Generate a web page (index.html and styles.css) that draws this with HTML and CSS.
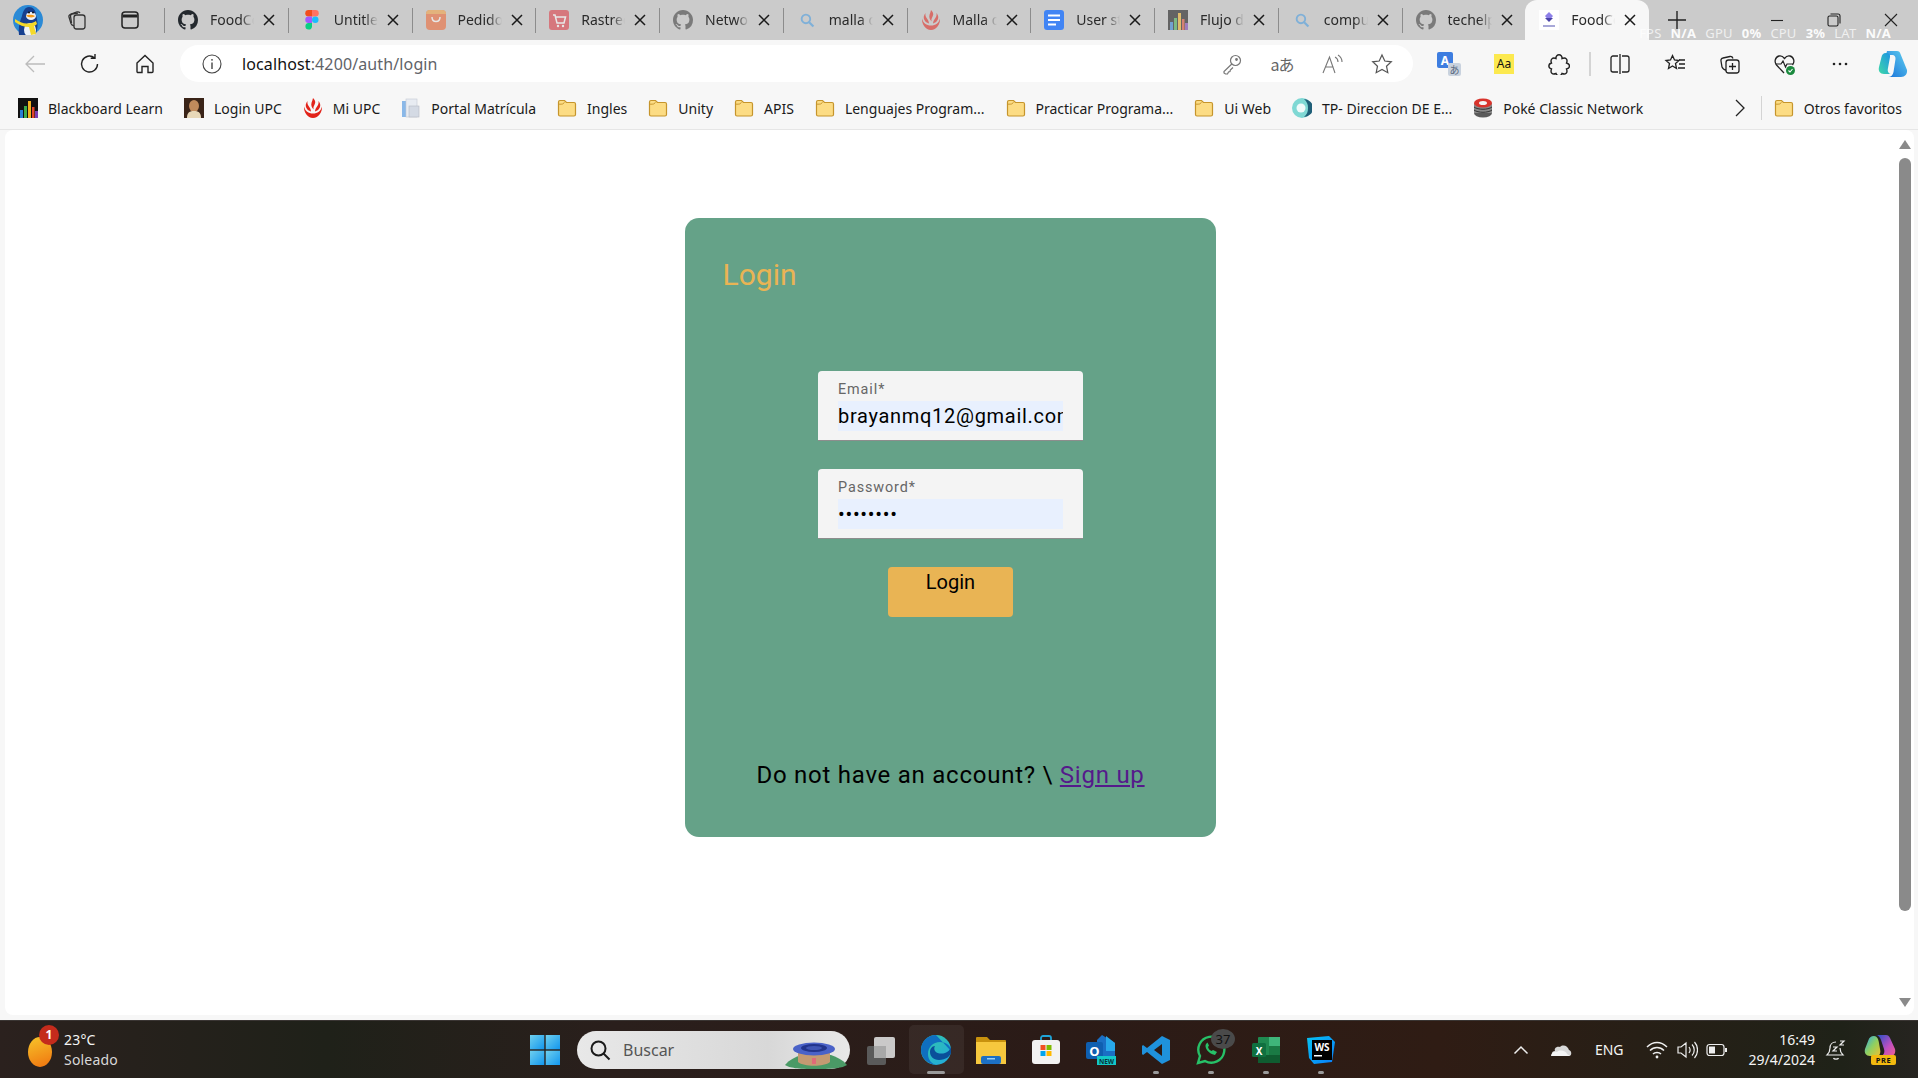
FILE: index.html
```html
<!DOCTYPE html>
<html lang="es">
<head>
<meta charset="utf-8">
<title>FoodCompass</title>
<link rel="stylesheet" href="styles.css">
</head>
<body>
<svg class="sprite" aria-hidden="true">
  <symbol id="github" viewBox="0 0 16 16"><path fill="currentColor" d="M8 0C3.58 0 0 3.58 0 8c0 3.54 2.29 6.53 5.47 7.59.4.07.55-.17.55-.38 0-.19-.01-.82-.01-1.49-2.01.37-2.53-.49-2.69-.94-.09-.23-.48-.94-.82-1.13-.28-.15-.68-.52-.01-.53.63-.01 1.08.58 1.23.82.72 1.21 1.87.87 2.33.66.07-.52.28-.87.51-1.07-1.78-.2-3.64-.89-3.64-3.95 0-.87.31-1.59.82-2.15-.08-.2-.36-1.02.08-2.12 0 0 .67-.21 2.2.82.64-.18 1.32-.27 2-.27.68 0 1.36.09 2 .27 1.53-1.04 2.2-.82 2.2-.82.44 1.1.16 1.92.08 2.12.51.56.82 1.27.82 2.15 0 3.07-1.87 3.75-3.65 3.95.29.25.54.73.54 1.48 0 1.07-.01 1.93-.01 2.2 0 .21.15.46.55.38A8.013 8.013 0 0016 8c0-4.42-3.58-8-8-8z"/></symbol>
  <symbol id="close" viewBox="0 0 14 14"><path d="M2 2l10 10M12 2L2 12" stroke="#1a1a1a" stroke-width="1.5" fill="none"/></symbol>
  <symbol id="search" viewBox="-4 -4 28 28"><circle cx="8.5" cy="8.5" r="6" fill="none" stroke="#7fb0d8" stroke-width="2.6"/><path d="M13 13l6 6" stroke="#7fb0d8" stroke-width="3"/></symbol>
  <symbol id="upc" viewBox="0 0 20 20"><path fill="#e2231a" d="M10 0c2 2 3 4 1.600 6.500C10.500 8.500 10 10 10.800 11.500 8.500 10 7.800 7 8.600 4.600 9.100 3 9.800 1.500 10 0zM4.500 3c-.3 2 0 3.500 1.300 5.200C7.300 10.300 8 12 8 13.500 5 13 2.300 10 2.800 6.600 3 5.200 3.700 4 4.500 3zM15.500 3c.8 1 1.500 2.200 1.700 3.600.5 3.400-2.200 6.400-5.200 6.900 0-1.500.7-3.200 2.200-5.300C15.500 6.500 15.800 5 15.500 3zM1 8.500C2 13 5.500 15.500 10 15.500S18 13 19 8.500c.5 5.500-3.500 11.500-9 11.500S.5 14 1 8.500z"/></symbol>
  <symbol id="bars" viewBox="0 0 20 20"><rect width="20" height="20" fill="#111"/><rect x="2" y="12" width="3" height="8" fill="#2a7fd5"/><rect x="6" y="8" width="3" height="12" fill="#3bab4a"/><rect x="10" y="3" width="3" height="17" fill="#f2b01e"/><rect x="14" y="9" width="2.500" height="11" fill="#e0452c"/><rect x="17" y="13" width="3" height="7" fill="#7a3fb0"/></symbol>
  <symbol id="folder" viewBox="0 0 20 20"><path d="M1.500 4c0-1 .6-1.500 1.500-1.500h4.500L9.500 4.500H17c1 0 1.500.6 1.500 1.500v10.500c0 1-.6 1.500-1.500 1.500H3c-1 0-1.500-.6-1.500-1.500z" fill="#fcdc84" stroke="#c6952c" stroke-width="1.200"/><path d="M1.500 6.200c2 0 3 0 4-.2l2-1.500" fill="none" stroke="#c6952c" stroke-width="1"/></symbol>
</svg>

<header class="tabstrip">
  <div class="lead">
    <svg class="avatar" viewBox="0 0 30 30"><circle cx="15" cy="15" r="15" fill="#2b8ad6"/><path d="M6 30c-1-8 1-14 3-19 1-5 3-9 7-9s7 3 7 8c2 6 2 14 0 18-3 2-11 4-17 2z" fill="#17408f"/><ellipse cx="17" cy="25" rx="6" ry="7" fill="#eef3fa"/><ellipse cx="18" cy="11" rx="5" ry="4" fill="#eef3fa"/><path d="M13 10.500c2-1 7-1 9 .5-1 2-7 2-9-.5z" fill="#f59a1b"/><circle cx="16" cy="7.500" r="1" fill="#111"/><circle cx="20" cy="7.500" r="1" fill="#111"/><path d="M2 14c4 3 9 5 13 4.500 3 0 6-1 8-2.500l1 3c-1 1-2 1.500-3 2l2 8-5 1-2-8c-5 0-10-2-14-5z" fill="#f4d92a"/></svg>
    <svg class="ico22" viewBox="0 0 22 22" fill="none" stroke="#333" stroke-width="1.300"><rect x="8" y="6" width="11" height="14" rx="2.500"/><path d="M8 17c-1.500-.5-2.500-1-3-2.500L3 8c-.4-1.500.5-2.500 2-3l6-2c1.300-.3 2.300 0 3 1"/><path d="M5.500 14l-1-7c0-1 .5-1.800 1.500-2l6-.8"/></svg>
    <svg class="ico22" viewBox="0 0 22 22" fill="none" stroke="#222" stroke-width="1.500"><rect x="3" y="3" width="16" height="16" rx="3"/><path d="M3.500 7h15" stroke-width="3"/></svg>
  </div>
  <div class="tab"><svg class="fav gh-dark"><use href="#github"/></svg><span class="tab-title">FoodCompass</span><svg class="x"><use href="#close"/></svg></div>
  <div class="tab"><svg class="fav" viewBox="0 0 20 20"><path d="M6.500 0H10v6.500H6.500a3.250 3.250 0 010-6.500z" fill="#f24e1e"/><path d="M10 0h3.500a3.250 3.250 0 010 6.500H10z" fill="#ff7262"/><path d="M6.500 6.500H10V13H6.500a3.250 3.250 0 010-6.500z" fill="#a259ff"/><circle cx="13.250" cy="9.750" r="3.250" fill="#1abcfe"/><path d="M6.500 13H10v3.500a3.300 3.300 0 11-3.500-3.500z" fill="#0acf83"/></svg><span class="tab-title">Untitled</span><svg class="x"><use href="#close"/></svg></div>
  <div class="tab"><svg class="fav dim" viewBox="0 0 20 20"><rect width="20" height="20" rx="4" fill="#f0622c"/><path d="M0 4a4 4 0 014-4h12a4 4 0 014 4z" fill="#f7a13c"/><path d="M6 7c0 6 8 6 8 0" fill="none" stroke="#fff" stroke-width="1.500"/></svg><span class="tab-title">Pedidos</span><svg class="x"><use href="#close"/></svg></div>
  <div class="tab"><svg class="fav dim" viewBox="0 0 20 20"><rect width="20" height="20" rx="3" fill="#e0343f"/><path d="M4 5h2l2 8h7l1.500-6H7" fill="none" stroke="#fff" stroke-width="1.500"/><circle cx="9" cy="16" r="1.200" fill="#fff"/><circle cx="14" cy="16" r="1.200" fill="#fff"/></svg><span class="tab-title">Rastreo</span><svg class="x"><use href="#close"/></svg></div>
  <div class="tab"><svg class="fav gh-dim"><use href="#github"/></svg><span class="tab-title">Network</span><svg class="x"><use href="#close"/></svg></div>
  <div class="tab"><svg class="fav"><use href="#search"/></svg><span class="tab-title">malla de</span><svg class="x"><use href="#close"/></svg></div>
  <div class="tab"><svg class="fav dim"><use href="#upc"/></svg><span class="tab-title">Malla de</span><svg class="x"><use href="#close"/></svg></div>
  <div class="tab"><svg class="fav" viewBox="0 0 20 20"><rect width="20" height="20" rx="3" fill="#4285f4"/><path d="M4 5.500h12M4 10h12M4 14.500h8" stroke="#fff" stroke-width="2"/></svg><span class="tab-title">User stories</span><svg class="x"><use href="#close"/></svg></div>
  <div class="tab"><svg class="fav dim"><use href="#bars"/></svg><span class="tab-title">Flujo de</span><svg class="x"><use href="#close"/></svg></div>
  <div class="tab"><svg class="fav"><use href="#search"/></svg><span class="tab-title">computer</span><svg class="x"><use href="#close"/></svg></div>
  <div class="tab"><svg class="fav gh-dim"><use href="#github"/></svg><span class="tab-title">techelp</span><svg class="x"><use href="#close"/></svg></div>
  <div class="tab tab-active"><svg class="fav" viewBox="0 0 20 20"><rect width="20" height="20" fill="#fff"/><path d="M10 2l4 4-4 5-4-5z" fill="#8d80e8"/><path d="M6 8h8l-4 4z" fill="#4a43a8"/><path d="M4 16h12" stroke="#a8a8d8" stroke-width="2"/></svg><span class="tab-title">FoodCompass</span><svg class="x"><use href="#close"/></svg></div>
  <svg class="newtab" viewBox="0 0 20 20"><path d="M10 1v18M1 10h18" stroke="#222" stroke-width="1.400"/></svg>
  <div class="winctl">
    <svg viewBox="0 0 16 16"><path d="M2 8.500h12" stroke="#222" stroke-width="1.100"/></svg>
    <svg viewBox="0 0 16 16" fill="none" stroke="#222" stroke-width="1.100"><rect x="2" y="4" width="10" height="10" rx="1.500"/><path d="M4.500 2h7.500a2 2 0 012 2v7.500"/></svg>
    <svg viewBox="0 0 16 16"><path d="M2 2l12 12M14 2L2 14" stroke="#222" stroke-width="1.100"/></svg>
  </div>
  <div class="perf">FPS <b>N/A</b> GPU <b>0%</b> CPU <b>3%</b> LAT <b>N/A</b></div>
</header>

<nav class="toolbar">
  <div class="navbtn"><svg class="ico22" viewBox="0 0 22 22" fill="none" stroke="#bcbcbc" stroke-width="1.300"><path d="M21 11H2M10 3l-8 8 8 8"/></svg></div>
  <div class="navbtn"><svg class="ico22" viewBox="0 0 22 22" fill="none" stroke="#222" stroke-width="1.400"><path d="M18.500 11a8 8 0 11-3-6.200M16 1v4.300h-4.300"/></svg></div>
  <div class="navbtn"><svg class="ico22" viewBox="0 0 22 22" fill="none" stroke="#222" stroke-width="1.400"><path d="M3 10l8-7.500 8 7.500v8.500a1 1 0 01-1 1h-4v-6H8v6H4a1 1 0 01-1-1z"/></svg></div>
  <div class="address">
    <svg class="ico20" viewBox="0 0 20 20" fill="none" stroke="#444" stroke-width="1.100"><circle cx="10" cy="10" r="9"/><path d="M10 8.500V15" stroke-width="1.400"/><circle cx="10" cy="5.800" r=".9" fill="#444" stroke="none"/></svg>
    <span class="url"><span class="host">localhost</span>:4200/auth/login</span>
    <div class="addr-tools">
      <div class="navbtn50"><svg class="ico22" viewBox="0 0 22 22" fill="none" stroke="#777" stroke-width="1.200"><circle cx="14.500" cy="7.500" r="5"/><path d="M10.800 11L3 18.500v1.500l1.500 1h2l1-2 1.500-.5.300-1.500L12 14.500"/><circle cx="15.500" cy="6.500" r=".8" fill="#777"/></svg></div>
      <div class="navbtn50"><span class="translate">aあ</span></div>
      <div class="navbtn50"><svg class="ico22" viewBox="0 0 22 22" fill="none" stroke="#777" stroke-width="1.100"><path d="M2 20L8.500 4 14 20M4.500 14h8M14 4c2 1 3 3 3 5M17 2c2.500 1.500 4 4 4 7"/></svg></div>
      <div class="navbtn50"><svg class="ico22" viewBox="0 0 22 22" fill="none" stroke="#555" stroke-width="1.200"><path d="M11 2l2.800 6 6.500.8-4.800 4.400 1.300 6.500L11 16.500l-5.800 3.200 1.300-6.500L1.700 8.800 8.200 8z"/></svg></div>
    </div>
  </div>
  <div class="tools">
    <div class="navbtn"><svg class="ico26" viewBox="0 0 26 26"><rect x="1" y="1" width="16" height="16" rx="2" fill="#3d7de0"/><text x="9" y="14" class="t-a">A</text><rect x="12" y="12" width="13" height="13" rx="2" fill="#c9d2de"/><text x="18.500" y="23" class="t-ja">あ</text></svg></div>
    <div class="navbtn"><span class="aa">Aa</span></div>
    <div class="navbtn"><svg class="ico22" viewBox="0 0 22 22" fill="none" stroke="#222" stroke-width="1.400"><path d="M8 5.500c-.5-5 6.500-5 6 0 4-1.500 6 1 4.500 4.500 4 1 4 5 0 6 1.500 4-1 6-4.500 4.500-1 3-5 3-6 0-3.500 1.500-6-.5-4.500-4.500-3.500-1-3.500-5 0-6C2 6.500 4.500 4 8 5.500z"/></svg></div>
    <span class="tool-sep"></span>
    <div class="navbtn"><svg class="ico22" viewBox="0 0 22 22" fill="none" stroke="#222" stroke-width="1.300"><path d="M9 3H4a2 2 0 00-2 2v12a2 2 0 002 2h5M13 3h5a2 2 0 012 2v12a2 2 0 01-2 2h-5M11 1v20"/></svg></div>
    <div class="navbtn"><svg class="ico22" viewBox="0 0 22 22" fill="none" stroke="#222" stroke-width="1.300"><path d="M8.500 2.500l2 4.500 4.500.5-3.500 3 1 5-4-2.500L4.500 15.500l1-5L2 7.500l4.500-.5zM15 7h6M15 11h6M14 15h7"/></svg></div>
    <div class="navbtn"><svg class="ico22" viewBox="0 0 22 22" fill="none" stroke="#222" stroke-width="1.300"><rect x="7" y="7" width="13" height="13" rx="2.500"/><path d="M13.500 10v7M10 13.500h7M7 17c-2 0-3-1-4-3L2 8c-.3-1.500.4-2.700 2-3l7-1.500c1.500-.2 2.500.5 3 2"/></svg></div>
    <div class="navbtn"><svg class="ico24" viewBox="0 0 24 24"><path d="M11 21L3.500 13C1 10 2 5 6 4c2-.5 4 .5 5.500 2.500C13 4.500 15 3.500 17 4c4 1 5 6 2.500 9" fill="none" stroke="#222" stroke-width="1.300"/><path d="M2.500 12H8l2-3 2.500 6 1.500-3h6" fill="none" stroke="#222" stroke-width="1.200"/><circle cx="17.500" cy="18.500" r="4.500" fill="#1b8a3e"/><path d="M15.500 18.500l1.500 1.500 2.500-3" fill="none" stroke="#fff" stroke-width="1.100"/></svg></div>
    <div class="navbtn"><svg class="ico20" viewBox="0 0 20 20"><circle cx="4" cy="10" r="1.300" fill="#222"/><circle cx="10" cy="10" r="1.300" fill="#222"/><circle cx="16" cy="10" r="1.300" fill="#222"/></svg></div>
    <div class="navbtn copilot-slot"><svg class="ico32" viewBox="0 0 32 32"><defs><linearGradient id="cp1" x1="0" y1="1" x2="1" y2="0"><stop offset="0" stop-color="#3ed8a8"/><stop offset="1" stop-color="#1a8fe8"/></linearGradient><linearGradient id="cp2" x1="0" y1="1" x2="1" y2="0"><stop offset="0" stop-color="#1870d8"/><stop offset="1" stop-color="#5fd0f0"/></linearGradient></defs><path d="M10 3h10c2 0 3 1 3.500 3L30 22c.5 4-2 7-6 7H11c3 0 5-2 5.500-5l2-13c.3-2-1-4-3-4H9z" fill="url(#cp2)"/><path d="M9 5C6 5 5 7 4.500 9L2 19c-1 4 1 7 5 7h8c-3 0-5-2-4-6l2-11c.5-2-1-4-4-4z" fill="url(#cp1)"/></svg></div>
  </div>
</nav>

<nav class="bookmarks">
  <a class="bm"><svg class="ico20"><use href="#bars"/></svg><span>Blackboard Learn</span></a>
  <a class="bm"><svg class="ico20" viewBox="0 0 20 20"><rect width="20" height="20" fill="#3a2418"/><ellipse cx="10" cy="8" rx="5" ry="6" fill="#c08a5c"/><path d="M3 20c0-6 3-7 7-7s7 1 7 7z" fill="#e8d8b8"/></svg><span>Login UPC</span></a>
  <a class="bm"><svg class="ico20"><use href="#upc"/></svg><span>Mi UPC</span></a>
  <a class="bm"><svg class="ico20" viewBox="0 0 20 20"><rect x="1" y="3" width="5" height="16" fill="#8ab8e8"/><rect x="5" y="1" width="11" height="18" fill="#e8ecf2" stroke="#c4cad4" stroke-width=".6"/><rect x="8" y="8" width="10" height="11" fill="#d4dae4" stroke="#b4bac4" stroke-width=".6"/></svg><span>Portal Matrícula</span></a>
  <a class="bm"><svg class="ico20"><use href="#folder"/></svg><span>Ingles</span></a>
  <a class="bm"><svg class="ico20"><use href="#folder"/></svg><span>Unity</span></a>
  <a class="bm"><svg class="ico20"><use href="#folder"/></svg><span>APIS</span></a>
  <a class="bm"><svg class="ico20"><use href="#folder"/></svg><span>Lenguajes Program...</span></a>
  <a class="bm"><svg class="ico20"><use href="#folder"/></svg><span>Practicar Programa...</span></a>
  <a class="bm"><svg class="ico20"><use href="#folder"/></svg><span>Ui Web</span></a>
  <a class="bm"><svg class="ico20" viewBox="0 0 20 20"><circle cx="10" cy="10" r="10" fill="#7fd8d4"/><path d="M12 1a9 9 0 010 18c3-3 4-5 4-9s-1-6-4-9z" fill="#1f5f78"/><circle cx="9" cy="10" r="4.500" fill="#f0fafa"/></svg><span>TP- Direccion DE E...</span></a>
  <a class="bm"><svg class="ico20" viewBox="0 0 20 20"><ellipse cx="10" cy="15" rx="9" ry="4.500" fill="#5a5a5a"/><rect x="1" y="5" width="18" height="10" fill="#8a8a8a"/><ellipse cx="10" cy="5" rx="9" ry="4.500" fill="#d8342c"/><ellipse cx="10" cy="5" rx="4" ry="2" fill="#f4f4f4"/><path d="M1 9c4 3 14 3 18 0M1 12c4 3 14 3 18 0" stroke="#333" fill="none"/></svg><span>Poké Classic Network</span></a>
  <div class="bm-end">
    <svg class="ico20" viewBox="0 0 20 20" fill="none" stroke="#222" stroke-width="1.300"><path d="M6 2l8 8-8 8"/></svg>
    <span class="bm-sep"></span>
    <a class="bm"><svg class="ico20"><use href="#folder"/></svg><span>Otros favoritos</span></a>
  </div>
</nav>

<div class="viewport">
  <div class="page">
    <main class="page-body">
      <section class="card">
        <h2 class="card-title">Login</h2>
        <form class="form">
          <div class="field"><label class="field-label">Email*</label><div class="field-input">brayanmq12@gmail.com</div></div>
          <div class="field"><label class="field-label">Password*</label><div class="field-input">••••••••</div></div>
          <button class="submit" type="button">Login</button>
        </form>
        <p class="signup">Do not have an account? \ <a class="signup-link">Sign up</a></p>
      </section>
    </main>
    <div class="scrollbar">
      <span class="arrow-up"></span>
      <span class="thumb"></span>
      <span class="arrow-down"></span>
    </div>
  </div>
</div>

<footer class="taskbar">
  <div class="weather">
    <span class="sun"><span class="badge">1</span></span>
    <div class="weather-text"><span>23°C</span><span class="soft">Soleado</span></div>
  </div>
  <svg class="winlogo" viewBox="0 0 30 30"><defs><linearGradient id="w1" x1="0" y1="0" x2="1" y2="1"><stop offset="0" stop-color="#6fd0ee"/><stop offset="1" stop-color="#1296ee"/></linearGradient></defs><rect width="14.300" height="14.300" fill="url(#w1)"/><rect x="15.700" width="14.300" height="14.300" fill="url(#w1)"/><rect y="15.700" width="14.300" height="14.300" fill="url(#w1)"/><rect x="15.700" y="15.700" width="14.300" height="14.300" fill="url(#w1)"/></svg>
  <div class="searchbox">
    <svg class="ico22" viewBox="0 0 22 22" fill="none" stroke="#1a1a1a" stroke-width="2"><circle cx="9.500" cy="9.500" r="7"/><path d="M14.500 14.500l6 6"/></svg>
    <span>Buscar</span>
    <svg class="stadium" viewBox="0 0 62 29"><path d="M0 25c4-5 10-8 16-10h30c6 2 12 5 16 10-5 3-12 4-31 4S5 28 0 25z" fill="#4a9a66"/><path d="M13 9v13c6 5 26 5 32 0V9z" fill="#c49a72"/><ellipse cx="29" cy="9" rx="21" ry="6.500" fill="#4a62c8"/><ellipse cx="29" cy="8" rx="13" ry="4" fill="#22348c"/><ellipse cx="29" cy="8" rx="8" ry="2" fill="#3f55b4"/><rect x="27" y="18" width="4" height="6" fill="#e06a78"/></svg>
  </div>
  <div class="apps">
    <div class="app"><svg class="ico30" viewBox="0 0 30 30"><rect x="1" y="11" width="19" height="19" rx="2" fill="#5a5a5a"/><rect x="8" y="2" width="21" height="21" rx="2" fill="#d8d8d8" opacity=".92"/><rect x="8" y="11" width="12" height="12" fill="#a8a8a8"/></svg></div>
    <div class="app app-active"><svg class="ico32" viewBox="0 0 32 32"><defs><linearGradient id="e1" x1="0" y1="0" x2="1" y2="1"><stop offset="0" stop-color="#36c9a4"/><stop offset="1" stop-color="#1fa8e0"/></linearGradient></defs><circle cx="16" cy="16" r="15" fill="url(#e1)"/><path d="M31 17c0-6-6-9-11-9-7 0-12 5-12 12 0 6 4 11 10 11C8 31 1 24 1 16S7 1 16 1" fill="#0f6fc0"/><path d="M31 19c-1 3-5 7-12 7-6 0-9-4-9-8 0-3 2-6 5-6-1 2-1 3 0 5 2 3 7 3 10 2 3-1 5-3 6-6z" fill="#0a4f9a"/></svg><i class="running wide"></i></div>
    <div class="app"><svg class="ico30" viewBox="0 0 30 30"><path d="M0 3a1 1 0 011-1h10l3 3h15a1 1 0 011 1v5H0z" fill="#c8920e"/><path d="M0 7h30v22H0z" fill="#f6c83e"/><rect x="5" y="21" width="20" height="8" rx="2" fill="#1d70c4"/><rect x="11" y="23" width="8" height="1.500" fill="#9cd0f4"/></svg></div>
    <div class="app"><svg class="ico30" viewBox="0 0 30 30"><path d="M10 6V3a2 2 0 012-2h6a2 2 0 012 2v3" fill="none" stroke="#1fa4d8" stroke-width="1.800"/><rect x="1" y="5" width="28" height="24" rx="3" fill="#f2f2f2"/><rect x="9.500" y="10" width="5" height="5" fill="#f25022"/><rect x="15.500" y="10" width="5" height="5" fill="#7fba00"/><rect x="9.500" y="16" width="5" height="5" fill="#00a4ef"/><rect x="15.500" y="16" width="5" height="5" fill="#ffb900"/></svg></div>
    <div class="app"><svg class="ico30" viewBox="0 0 30 30"><path d="M16 0l13 8v14H11V5z" fill="#1a6fc4"/><path d="M20 1l9 7v8h-9z" fill="#28a8ea"/><rect x="0" y="7" width="17" height="17" rx="2" fill="#0f5fb0"/><text x="8.500" y="21" class="t-o">O</text><rect x="11" y="21" width="19" height="9" fill="#13c8c8"/><text x="20.500" y="28.500" class="t-new">NEW</text></svg></div>
    <div class="app"><svg class="ico30" viewBox="0 0 30 30"><path d="M21 1l8 4v20l-8 4L6 17l-4 3-1-1V11l1-1 4 3zM21 9l-8 6 8 6z" fill="#1f92dc"/></svg><i class="running"></i></div>
    <div class="app"><svg class="ico30" viewBox="0 0 30 30"><path d="M2 28l2-7a13 13 0 115 5z" fill="none" stroke="#27c168" stroke-width="2.400"/><path d="M10 9c-2 3 2 10 9 11l2-3-4-2-1.500 1c-2-1-3-2-3.500-4l1-1.500-1.500-3z" fill="#27c168"/></svg><span class="wa-badge">37</span><i class="running"></i></div>
    <div class="app"><svg class="ico30" viewBox="0 0 30 30"><rect x="7" y="2" width="22" height="26" rx="1" fill="#1f8a50"/><rect x="18" y="2" width="11" height="9" fill="#3fb67a"/><rect x="18" y="11" width="11" height="9" fill="#1a7a44"/><rect x="7" y="20" width="22" height="8" fill="#0f5c30"/><rect x="1" y="8" width="14" height="14" rx="1.500" fill="#107040"/><text x="8" y="19.500" class="t-x">X</text></svg><i class="running"></i></div>
    <div class="app"><svg class="ico30" viewBox="0 0 30 30"><defs><linearGradient id="ws" x1="0" y1="0" x2="1" y2="1"><stop offset="0" stop-color="#07c3f2"/><stop offset="1" stop-color="#087cfa"/></linearGradient></defs><path d="M1 3l22-2 6 6-3 20-18 2-5-6z" fill="url(#ws)"/><rect x="6" y="5" width="20" height="20" fill="#000"/><text x="16" y="16" class="t-ws">WS</text><rect x="8" y="20" width="8" height="1.500" fill="#fff"/></svg><i class="running"></i></div>
  </div>
  <div class="tray">
    <svg class="tray-chev" viewBox="0 0 16 10" fill="none" stroke="#eee" stroke-width="1.500"><path d="M1.500 8.500L8 2l6.500 6.500"/></svg>
    <svg class="tray-cloud" viewBox="0 0 22 14"><path d="M5 13h14c3 0 3-5 0-6-1-4-6-6-9-3C6 3 4 6 5 8c-4 0-4 5 0 5z" fill="#d8d8d8"/><path d="M1 13c0-3 3-5 6-4 3-3 9-1 10 2l3 2z" fill="#f4f4f4"/></svg>
    <span class="lang">ENG</span>
    <svg class="ico22" viewBox="0 0 22 22" fill="none" stroke="#eee" stroke-width="1.500"><path d="M1 8c6-6 14-6 20 0M4 11.500c4-4 10-4 14 0M7 15c2-2 6-2 8 0"/><circle cx="11" cy="18" r="1.400" fill="#eee" stroke="none"/></svg>
    <svg class="ico22" viewBox="0 0 22 22" fill="none" stroke="#eee" stroke-width="1.200"><path d="M2 8h3l5-4v14l-5-4H2zM13 8c1.500 2 1.500 4 0 6M16 5.500c3 3 3 8 0 11M18.500 3c4 4.500 4 11.500 0 16"/></svg>
    <svg class="ico22" viewBox="0 0 22 22" fill="none" stroke="#eee" stroke-width="1.200"><rect x="1" y="5.500" width="17" height="11" rx="2.500"/><rect x="3" y="7.500" width="6" height="7" fill="#eee" stroke="none"/><path d="M20 9v4" stroke-width="2"/></svg>
    <div class="clock"><span>16:49</span><span>29/4/2024</span></div>
    <svg class="ico22" viewBox="0 0 22 22" fill="none" stroke="#eee" stroke-width="1.200"><path d="M11 3C7 3 5 6 5 9c0 4-2 6-3 7h16c-1-1-3-3-3-7M8.500 19c.5 1.500 4.500 1.500 5 0M8 8h4l-4 4h4M15 2h4l-4 4h4"/></svg>
    <svg class="ico32" viewBox="0 0 32 32"><defs><linearGradient id="cpp" x1="0" y1="0" x2="1" y2="1"><stop offset="0" stop-color="#2aa8e8"/><stop offset=".5" stop-color="#8fd060"/><stop offset="1" stop-color="#f0c030"/></linearGradient><linearGradient id="cpq" x1="0" y1="0" x2="1" y2="1"><stop offset="0" stop-color="#2050c8"/><stop offset=".6" stop-color="#c050c0"/><stop offset="1" stop-color="#f06090"/></linearGradient></defs><path d="M12 1h10c2 0 3 1 4 3l5 11c1 4-1 7-4 7h-9c2-2 3-4 2-7L17 6c-1-3-3-5-5-5z" fill="url(#cpq)"/><path d="M10 2c-3 0-5 2-5.500 4L1 15c-1 4 1 7 5 7h8c2-1 3-4 2-7l-1-6c-.5-4-2-7-5-7z" fill="url(#cpp)"/><rect x="7" y="21" width="25" height="10" rx="2" fill="#f2b90f"/><text x="19.500" y="29" class="t-pre">PRE</text></svg>
  </div>
</footer>
</body>
</html>
```
FILE: styles.css
```css
* { box-sizing: border-box; }
html, body { margin: 0; height: 100%; }
body {
  width: 1918px;
  height: 1078px;
  overflow: hidden;
  display: flex;
  flex-direction: column;
  background: #f7f7f7;
  font-family: "Noto Sans", "Open Sans", sans-serif;
  color: #1a1a1a;
}
svg { display: block; flex: none; }
.sprite { position: absolute; width: 0; height: 0; }
.ico20 { width: 20px; height: 20px; }
.ico22 { width: 22px; height: 22px; }
.ico24 { width: 24px; height: 24px; }
.ico26 { width: 26px; height: 26px; }
.ico30 { width: 30px; height: 30px; }
.ico32 { width: 32px; height: 32px; }

/* tab strip */
.tabstrip {
  position: relative;
  flex: none;
  height: 40px;
  display: flex;
  align-items: center;
  background: #cbcbcb;
}
.lead { width: 164px; display: flex; align-items: center; padding-left: 13px; }
.avatar { width: 30px; height: 30px; margin-right: 23px; }
.lead .ico22 + .ico22 { margin-left: 31px; }
.tab {
  flex: none;
  width: 123.75px;
  height: 25px;
  padding-left: 13px;
  display: flex;
  align-items: center;
  border-left: 1px solid #8c8c8c;
}
.fav { width: 20px; height: 20px; margin-right: 12px; }
.gh-dark { color: #24292e; }
.gh-dim { color: #7a7a7a; }
.dim { opacity: .55; }
.tab-title {
  width: 44px;
  margin-top: -2px;
  overflow: hidden;
  white-space: nowrap;
  font-size: 14px;
  color: #2a2a2a;
  -webkit-mask-image: linear-gradient(90deg, #000 70%, transparent 100%);
  mask-image: linear-gradient(90deg, #000 70%, transparent 100%);
}
.x { width: 14px; height: 14px; margin-left: 8px; }
.tab-active {
  align-self: flex-end;
  height: 40px;
  border-left: 0;
  padding-left: 14px;
  background: #f7f7f7;
  border-radius: 12px 12px 0 0;
}
.newtab { width: 20px; height: 20px; margin-left: 18px; }
.winctl { margin-left: auto; display: flex; align-items: center; gap: 41px; padding-right: 19px; }
.winctl svg { width: 16px; height: 16px; }
.perf {
  position: absolute;
  right: 27px;
  top: 25px;
  font-size: 13px;
  line-height: 16px;
  letter-spacing: .2px;
  white-space: pre;
  word-spacing: 5.5px;
  color: rgba(255, 255, 255, .72);
}
.perf b { color: rgba(255, 255, 255, .95); }

/* toolbar */
.toolbar {
  flex: none;
  height: 50px;
  display: flex;
  align-items: center;
  padding: 0 0 3px 7.5px;
  background: #f7f7f7;
}
.navbtn { width: 55px; height: 37px; display: flex; align-items: center; justify-content: center; flex: none; }
.navbtn50 { width: 50px; height: 37px; display: flex; align-items: center; justify-content: center; flex: none; }
.address {
  flex: none;
  width: 1233px;
  height: 37px;
  margin: 0 8.5px 0 7.5px;
  display: flex;
  align-items: center;
  padding: 0 6px 0 22px;
  background: #fff;
  border-radius: 19px;
}
.url { margin-left: 20px; font-size: 16px; letter-spacing: .12px; color: #5f6368; }
.host { color: #111; }
.addr-tools { margin-left: auto; display: flex; }
.translate { font: 16px "Noto Sans CJK JP", sans-serif; letter-spacing: -1px; color: #666; }
.tools { display: flex; align-items: center; }
.tool-sep { width: 2px; height: 24px; margin: 0 2px; background: #d4d4d4; }
.copilot-slot { width: 51px; }
.aa {
  width: 20px; height: 20px;
  display: flex; align-items: center; justify-content: center;
  background: #fce94f;
  font: 12px "Noto Sans", sans-serif;
  color: #111;
}
.t-a { font: 700 12px "Noto Sans", sans-serif; fill: #fff; text-anchor: middle; }
.t-ja { font: 10px "Noto Sans CJK JP", sans-serif; fill: #5a6a80; text-anchor: middle; }
.t-o { font: 700 13px "Noto Sans", sans-serif; fill: #fff; text-anchor: middle; }
.t-new { font: 700 6.5px "Noto Sans", sans-serif; fill: #06363c; text-anchor: middle; }
.t-x { font: 700 10px "Noto Sans", sans-serif; fill: #fff; text-anchor: middle; }
.t-ws { font: 700 10px "Noto Sans", sans-serif; fill: #fff; text-anchor: middle; }
.t-pre { font: 700 7.5px "Noto Sans", sans-serif; fill: #111; text-anchor: middle; letter-spacing: .5px; }

/* bookmarks */
.bookmarks {
  flex: none;
  height: 40px;
  display: flex;
  align-items: center;
  gap: 21px;
  padding: 0 16px 3px 18px;
  border-bottom: 1px solid #e6e6e6;
  background: #f7f7f7;
}
.bm { display: flex; align-items: center; gap: 10px; font-size: 14px; white-space: nowrap; color: #1a1a1a; }
.bm-end { margin-left: auto; display: flex; align-items: center; }
.bm-sep { width: 1px; height: 24px; margin: 0 12px 0 11px; background: #d4d4d4; }

/* page */
.viewport {
  flex: none;
  height: 890px;
  padding: 0 4px 5px 5px;
  display: flex;
  background: #f7f7f7;
}
.page {
  flex: 1;
  display: flex;
  background: #fff;
  border-radius: 8px;
  overflow: hidden;
}
.page-body { flex: 1; display: flex; justify-content: center; align-items: flex-start; padding-top: 88px; }
.card {
  width: 531px;
  height: 619px;
  display: flex;
  flex-direction: column;
  background: #65a288;
  border-radius: 14px;
  font-family: Roboto, sans-serif;
  color: #000;
}
.card-title {
  margin: 37px 0 0 37.6px;
  font: 400 30px/40px Roboto, sans-serif;
  color: #e9b454;
}
.form { margin-top: 76px; display: flex; flex-direction: column; align-items: center; gap: 28px; }
.field {
  width: 265px;
  height: 70px;
  padding: 8px 20px 0;
  background: #f4f4f4;
  border-radius: 4px 4px 0 0;
  border-bottom: 1px solid #8d8d8d;
}
.field-label {
  display: block;
  font-size: 14.4px;
  line-height: 22px;
  letter-spacing: .9px;
  color: #666;
}
.field-input {
  height: 30px;
  overflow: hidden;
  white-space: nowrap;
  font-size: 20px;
  line-height: 30px;
  letter-spacing: .7px;
  background: #e8f0fe;
  color: #000;
}
.submit {
  width: 125px;
  height: 50px;
  padding: 0 0 20px;
  border: 0;
  border-radius: 4px;
  background: #e9b454;
  font: 400 20px/24px Roboto, sans-serif;
  color: #000;
}
.signup {
  margin: auto 0 0;
  padding-bottom: 46px;
  text-align: center;
  font-size: 24px;
  line-height: 32px;
  letter-spacing: .75px;
}
.signup-link { color: #551a8b; text-decoration: underline; }
.scrollbar {
  width: 18px;
  flex: none;
  display: flex;
  flex-direction: column;
  align-items: center;
  padding: 10px 0 8px;
}
.arrow-up, .arrow-down { width: 0; height: 0; border-left: 6px solid transparent; border-right: 6px solid transparent; flex: none; }
.arrow-up { border-bottom: 9px solid #8a8a8a; }
.arrow-down { border-top: 9px solid #8a8a8a; margin-top: auto; }
.thumb { width: 12px; height: 753px; margin-top: 9px; border-radius: 6px; background: #8a8a8a; flex: none; }

/* taskbar */
.taskbar {
  flex: none;
  height: 58px;
  display: flex;
  align-items: center;
  border-top: 1px solid #3a3533;
  background: linear-gradient(90deg, #2b211e 0%, #1f2119 17%, #2a1f1c 32%, #2b1b17 55%, #2f1c14 75%, #1f2218 96%, #262420 100%);
  color: #f4f4f4;
  font-family: "Noto Sans", sans-serif;
}
.weather { width: 530px; display: flex; align-items: center; padding-left: 28px; flex: none; }
.sun {
  position: relative;
  width: 24px;
  height: 30px;
  margin: 4px 0 0 0;
  border-radius: 50% / 50%;
  background: linear-gradient(160deg, #f6c52a, #f0730f);
}
.badge {
  position: absolute;
  left: 11px;
  top: -12px;
  width: 20px;
  height: 20px;
  border-radius: 50%;
  background: #c42b1c;
  font: 700 12px/20px "Noto Sans", sans-serif;
  text-align: center;
  color: #fff;
}
.weather-text { display: flex; flex-direction: column; margin-left: 12px; font-size: 14px; line-height: 20px; letter-spacing: .2px; }
.soft { color: #d8d8d8; }
.winlogo { width: 30px; height: 30px; }
.searchbox {
  width: 273px;
  height: 38px;
  margin-left: 17px;
  padding: 0 0 0 12px;
  display: flex;
  align-items: center;
  gap: 12px;
  border-radius: 19px;
  background: linear-gradient(90deg, #e8e8e8, #d8d8d8 70%, #e8e8e8);
  font-size: 16px;
  color: #555;
}
.stadium { width: 62px; height: 29px; margin-left: auto; margin-right: 3px; align-self: flex-end; }
.apps { display: flex; margin-left: 3.5px; }
.app { position: relative; width: 55px; height: 49px; display: flex; align-items: center; justify-content: center; }
.app-active { background: rgba(255, 255, 255, .06); border-radius: 5px; }
.running { position: absolute; left: 24.5px; bottom: 0; width: 6px; height: 3px; border-radius: 2px; background: #9a9a9a; }
.running.wide { left: 18.5px; width: 18px; }
.wa-badge {
  position: absolute;
  left: 27.5px; top: 4px;
  width: 24px; height: 20px;
  border-radius: 50%;
  background: #4a4a4a;
  font-size: 13px;
  line-height: 20px;
  text-align: center;
  color: #111;
}
.tray { margin-left: auto; display: flex; align-items: center; padding-right: 22px; }
.tray-chev { width: 16px; height: 10px; }
.tray-cloud { width: 22px; height: 14px; margin-left: 21px; }
.lang { margin: 0 22px 0 23px; font-size: 14px; }
.tray .ico22 + .ico22 { margin-left: 8px; }
.clock { display: flex; flex-direction: column; align-items: flex-end; width: 78px; margin: 0 9.5px 0 9.5px; font-size: 14px; line-height: 20px; }
.tray > .ico32 { margin-left: 17.5px; }
```
